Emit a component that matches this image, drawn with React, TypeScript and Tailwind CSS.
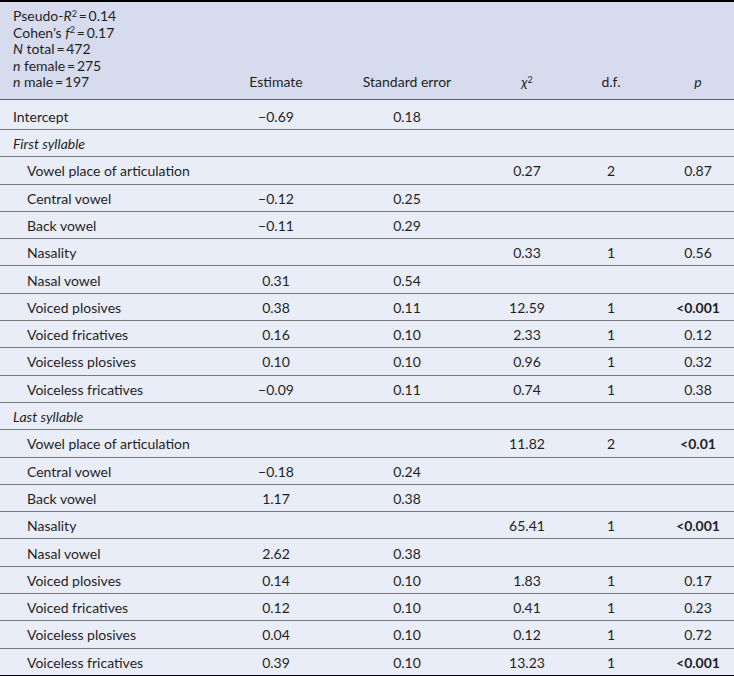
type Row = {
  label: string
  kind?: 'section' | 'top' | 'sub'
  est?: string
  se?: string
  chi?: string
  df?: string
  p?: string
  bold?: boolean
}

const rows: Row[] = [
  { label: 'Intercept', kind: 'top', est: '−0.69', se: '0.18' },
  { label: 'First syllable', kind: 'section' },
  { label: 'Vowel place of articulation', chi: '0.27', df: '2', p: '0.87' },
  { label: 'Central vowel', est: '−0.12', se: '0.25' },
  { label: 'Back vowel', est: '−0.11', se: '0.29' },
  { label: 'Nasality', chi: '0.33', df: '1', p: '0.56' },
  { label: 'Nasal vowel', est: '0.31', se: '0.54' },
  { label: 'Voiced plosives', est: '0.38', se: '0.11', chi: '12.59', df: '1', p: '<0.001', bold: true },
  { label: 'Voiced fricatives', est: '0.16', se: '0.10', chi: '2.33', df: '1', p: '0.12' },
  { label: 'Voiceless plosives', est: '0.10', se: '0.10', chi: '0.96', df: '1', p: '0.32' },
  { label: 'Voiceless fricatives', est: '−0.09', se: '0.11', chi: '0.74', df: '1', p: '0.38' },
  { label: 'Last syllable', kind: 'section' },
  { label: 'Vowel place of articulation', chi: '11.82', df: '2', p: '<0.01', bold: true },
  { label: 'Central vowel', est: '−0.18', se: '0.24' },
  { label: 'Back vowel', est: '1.17', se: '0.38' },
  { label: 'Nasality', chi: '65.41', df: '1', p: '<0.001', bold: true },
  { label: 'Nasal vowel', est: '2.62', se: '0.38' },
  { label: 'Voiced plosives', est: '0.14', se: '0.10', chi: '1.83', df: '1', p: '0.17' },
  { label: 'Voiced fricatives', est: '0.12', se: '0.10', chi: '0.41', df: '1', p: '0.23' },
  { label: 'Voiceless plosives', est: '0.04', se: '0.10', chi: '0.12', df: '1', p: '0.72' },
  { label: 'Voiceless fricatives', est: '0.39', se: '0.10', chi: '13.23', df: '1', p: '<0.001', bold: true },
]

const cols = 'grid grid-cols-[215px_122px_140px_100px_68px_89px]'
const eq = '\u2009=\u2009'

export default function App() {
  return (
    <div
      className="w-[734px] bg-[#e9edf7] text-[14px] text-[#1f1f1f]"
      style={{ fontFamily: 'Lato, "Open Sans", sans-serif' }}
    >
      {/* header */}
      <div className={`${cols} items-end border-t-2 border-b border-t-black border-b-[#5f5f5f] bg-[#d6dcee] pt-[6px] pb-[8px] leading-[16.6px]`}>
        <div className="pl-[13px]">
          <div>
            Pseudo-<i>R</i>
            <sup className="text-[9px]">2</sup>
            {eq}0.14
          </div>
          <div>
            Cohen’s <i>f</i>
            <sup className="text-[9px]">2</sup>
            {eq}0.17
          </div>
          <div>
            <i>N</i> total{eq}472
          </div>
          <div>
            <i>n</i> female{eq}275
          </div>
          <div>
            <i>n</i> male{eq}197
          </div>
        </div>
        <div className="text-center">Estimate</div>
        <div className="text-center">Standard error</div>
        <div className="text-center">
          <i>χ</i>
          <sup className="text-[9px]">2</sup>
        </div>
        <div className="text-center">d.f.</div>
        <div className="pl-[17px] text-center">
          <i>p</i>
        </div>
      </div>

      {rows.map((r, i) => {
        const last = i === rows.length - 1
        return (
          <div
            key={i}
            className={`${cols} items-center border-b ${last ? 'border-b-black' : 'border-b-[#7a7a7a]'} ${
              r.kind === 'top' ? 'h-[30px] pt-[4px]' : 'h-[27.3px] pt-[1px]'
            }`}
          >
            <div
              className={
                r.kind === 'section'
                  ? 'pl-[13px] italic'
                  : r.kind === 'top'
                  ? 'pl-[13px]'
                  : 'pl-[27px]'
              }
            >
              {r.label}
            </div>
            <div className="text-center">{r.est}</div>
            <div className="text-center">{r.se}</div>
            <div className="text-center">{r.chi}</div>
            <div className="text-center">{r.df}</div>
            <div className={`pl-[17px] text-center ${r.bold ? 'font-bold' : ''}`}>{r.p}</div>
          </div>
        )
      })}
    </div>
  )
}
